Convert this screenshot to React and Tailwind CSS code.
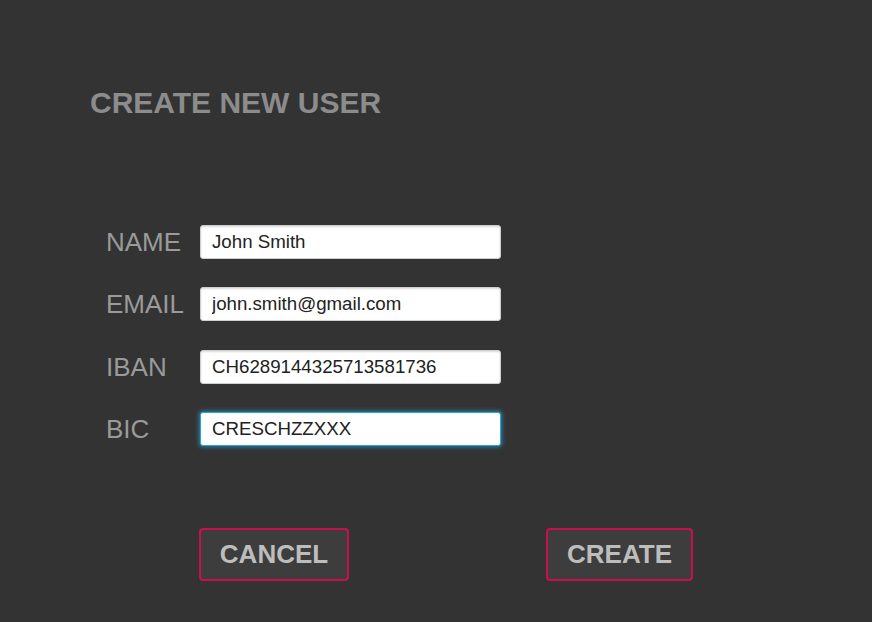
import { useState } from "react"

function Field({ label, value, focused, onChange }) {
  return (
    <div className="flex items-center h-[34px]">
      <label className="w-[94px] text-[26px] leading-none text-[#9a9a9a]">{label}</label>
      <input
        value={value}
        onChange={(e) => onChange(e.target.value)}
        autoFocus={focused}
        className={
          "w-[301px] h-[34px] rounded-[3px] bg-white px-[11px] text-[18.7px] text-[#222] outline-none " +
          (focused
            ? "border border-[#29a3dc] shadow-[0_0_4px_1px_rgba(41,163,220,0.7)]"
            : "border border-[#cfcfcf] shadow-[inset_0_1px_2px_rgba(0,0,0,0.15)]")
        }
      />
    </div>
  )
}

export default function App() {
  const [form, setForm] = useState({
    name: "John Smith",
    email: "john.smith@gmail.com",
    iban: "CH6289144325713581736",
    bic: "CRESCHZZXXX",
  })
  const set = (k) => (v) => setForm({ ...form, [k]: v })

  return (
    <div
      className="w-[872px] h-[622px] bg-[#333333] overflow-hidden"
      style={{ fontFamily: '"Liberation Sans", Arial, sans-serif' }}
    >
      <h1 className="pl-[90px] pt-[88px] text-[30px] font-bold leading-none text-[#8c8c8c]">
        CREATE NEW USER
      </h1>

      <div className="pl-[106px] pt-[107px] flex flex-col gap-[28.33px]">
        <Field label="NAME" value={form.name} onChange={set("name")} />
        <Field label="EMAIL" value={form.email} onChange={set("email")} />
        <Field label="IBAN" value={form.iban} onChange={set("iban")} />
        <Field label="BIC" value={form.bic} onChange={set("bic")} focused />
      </div>

      <div className="pl-[199px] pt-[82px] flex w-[693px] justify-between">
        <button className="w-[150px] h-[53px] rounded-[4px] border-2 border-[#c8104f] bg-[#3d3d3d] text-[26px] font-bold text-[#bdbdbd]">
          CANCEL
        </button>
        <button className="w-[147px] h-[53px] rounded-[4px] border-2 border-[#c8104f] bg-[#3d3d3d] text-[26px] font-bold text-[#bdbdbd]">
          CREATE
        </button>
      </div>
    </div>
  )
}
